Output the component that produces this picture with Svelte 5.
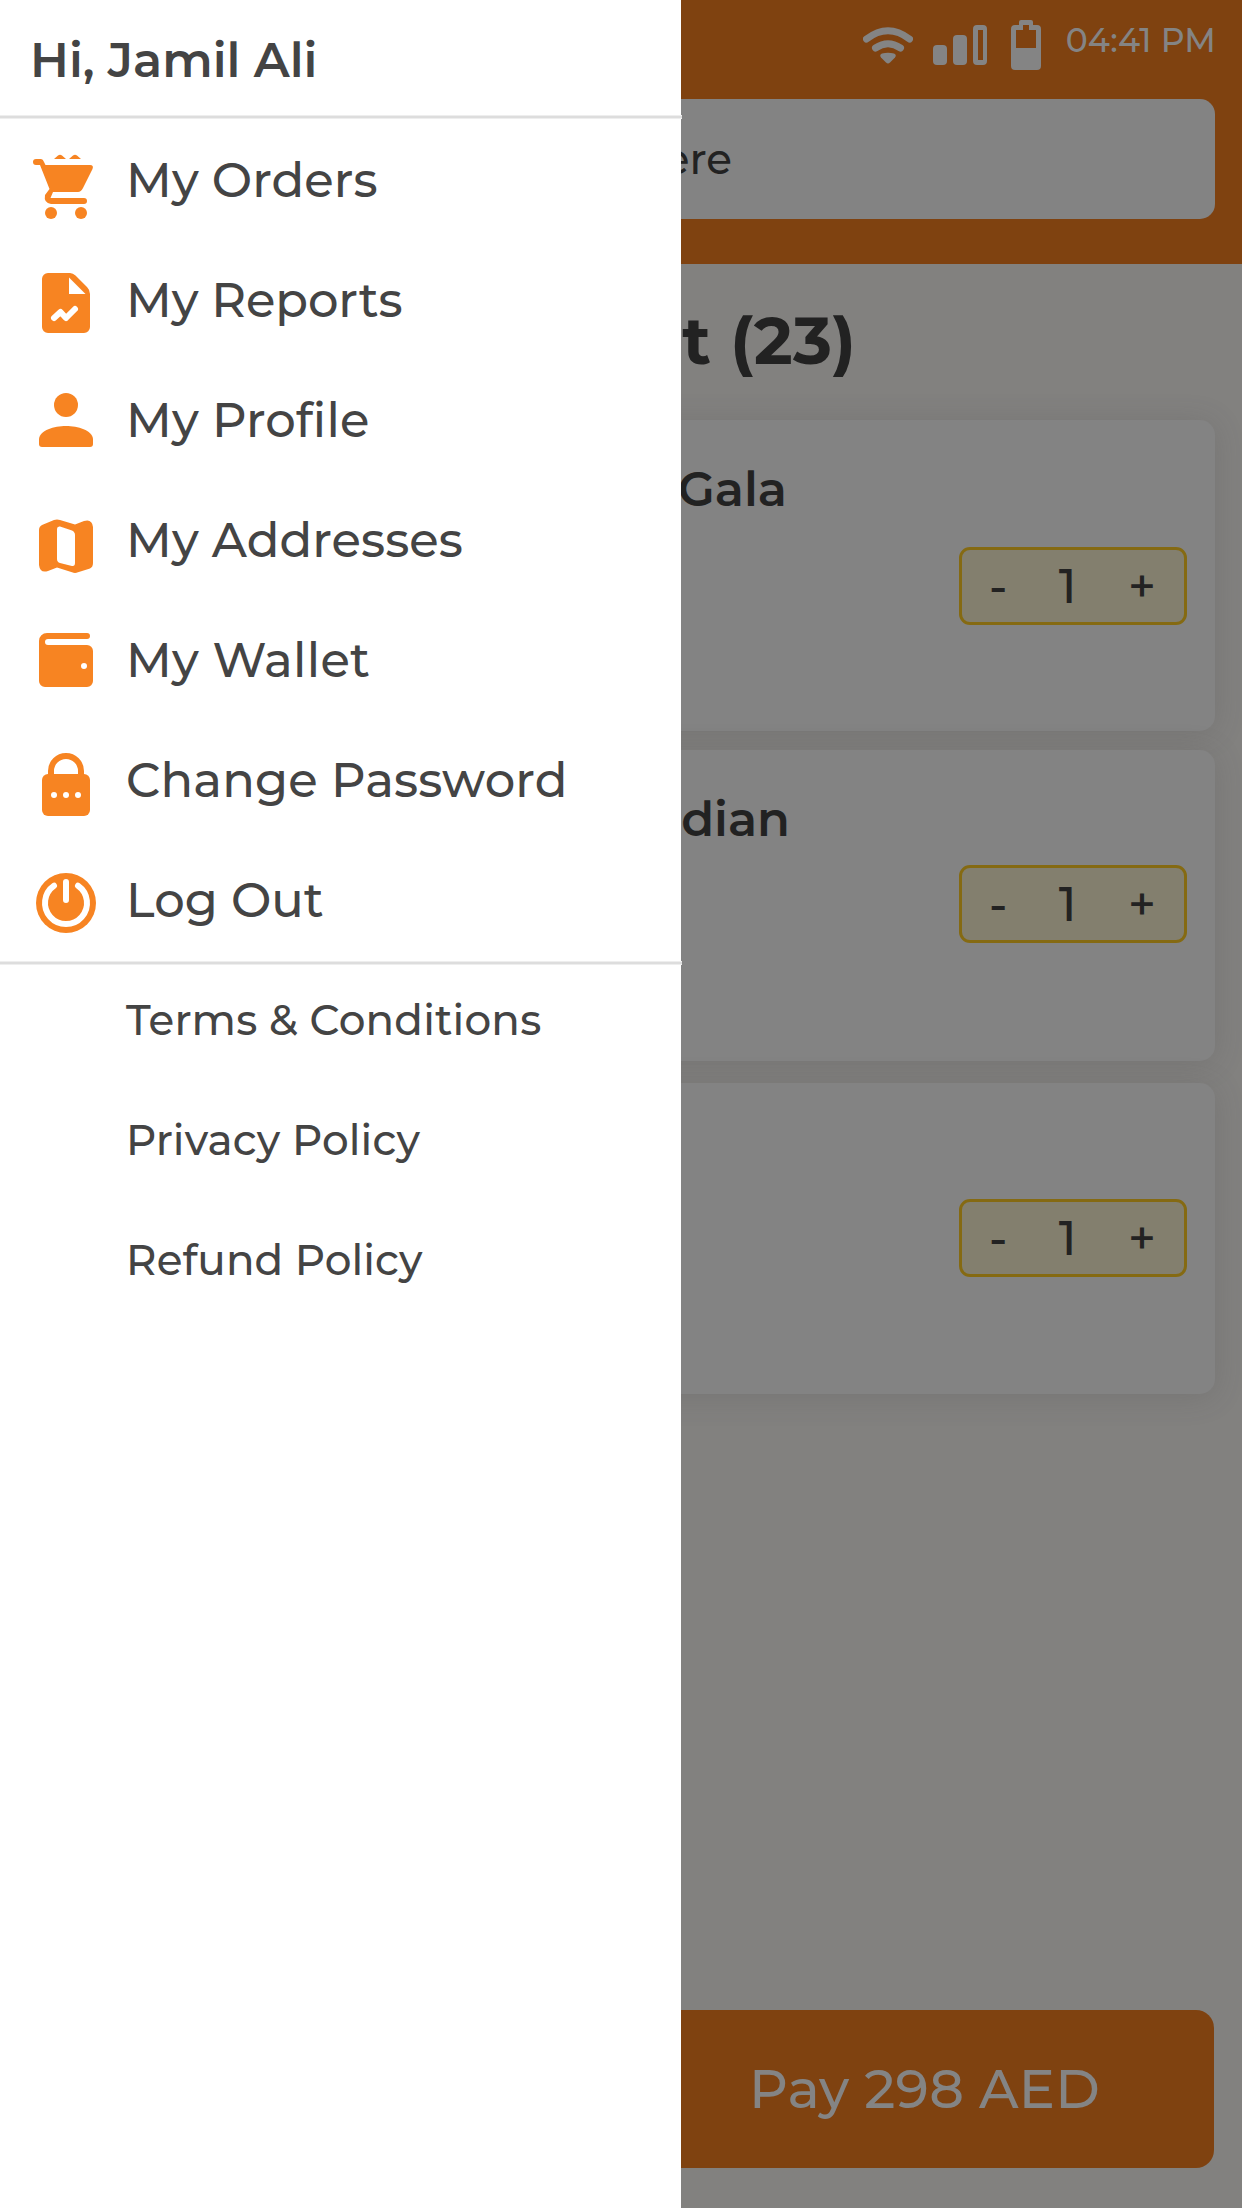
<script>
  // "track" is the letter spacing of a label, in pixels.
  const menu = [
    { icon: 'cart', label: 'My Orders', track: 0.08 },
    { icon: 'report', label: 'My Reports', track: -0.1 },
    { icon: 'person', label: 'My Profile', track: 0.14 },
    { icon: 'map', label: 'My Addresses', track: 0.07 },
    { icon: 'wallet', label: 'My Wallet', track: 0.28 },
    { icon: 'lock', label: 'Change Password', track: 0.19 },
    { icon: 'power', label: 'Log Out', track: 0.05 }
  ];
  const links = [
    { label: 'Terms & Conditions', track: 0.2 },
    { label: 'Privacy Policy', track: 0.17 },
    { label: 'Refund Policy', track: 0.1 }
  ];
  const items = [
    { name: 'Gala', kind: 'first' },
    { name: 'Canadian', kind: 'second' },
    { name: '', kind: 'third' }
  ];
</script>

<div class="screen">
  <main class="shop">
    <header class="top">
      <div class="status">
        <svg class="wifi" viewBox="0 0 50 38"><g fill="none" stroke="currentColor" stroke-width="7" stroke-linecap="round"><path d="M3.500 12Q25 -4.500 46.500 12" /><path d="M12.500 21Q25 12.500 37.500 21" /></g><path fill="currentColor" d="M19 26.500Q25 25 31 26.500Q34 28 32 30.500L27 35.500Q25 37.500 23 35.500L18 30.500Q16 28 19 26.500Z" /></svg>
        <svg class="signal" viewBox="0 0 55 40" fill="currentColor"><rect y="20" width="14" height="20" rx="4" /><rect x="20" y="10" width="14" height="30" rx="4" /><path fill-rule="evenodd" d="M44 0h6a4 4 0 0 1 4 4v32a4 4 0 0 1-4 4H44a4 4 0 0 1-4-4V4a4 4 0 0 1 4-4ZM45 5v30H50V5Z" /></svg>
        <svg class="battery" viewBox="0 0 30 50" fill="currentColor"><path fill-rule="evenodd" d="M10 0H20a2 2 0 0 1 2 2V5h4a4 4 0 0 1 4 4V46a4 4 0 0 1-4 4H4a4 4 0 0 1-4-4V9a4 4 0 0 1 4-4H8V2a2 2 0 0 1 2-2ZM12 5V10H5V28H25V10H18V5Z" /></svg>
        <span class="time">04:41 PM</span>
      </div>
      <div class="search"><span>Search here</span></div>
    </header>
    <h1>Cart (23)</h1>
    <div class="cards">
      {#each items as item}
        <article class="card {item.kind}">
          <div class="name">{item.name}</div>
          <div class="stepper"><span>-</span><span>1</span><span>+</span></div>
        </article>
      {/each}
    </div>
    <div class="pay">Pay 298 AED</div>
  </main>

  <aside class="drawer">
    <div class="hello">Hi, Jamil Ali</div>
    <nav>
      {#each menu as m}
        <div class="row">
          <svg class="icon" viewBox="0 0 100 120" fill="currentColor">
            {#if m.icon === 'cart'}
              <path d="M36 39H41Q43 39 44 42L45.500 45H90Q94 45 92.500 49L83 68Q81 72 78 72H53L50.500 78H84a3 3 0 0 1 0 6H51Q43.500 83 45 75L49.500 69L40 45H36a3 3 0 0 1 0-6ZM54 39L58 35.500Q60 34 62 35.500L66 39ZM69 39L73 35.500Q75 34 77 35.500L81 39Z" /><circle cx="51" cy="93" r="6" /><circle cx="81" cy="93" r="6" />
            {:else if m.icon === 'report'}
              <path fill-rule="evenodd" d="M48 33H70Q73 33 75.500 35.500L87 47Q90 50 90 54V87a6 6 0 0 1-6 6H48a6 6 0 0 1-6-6V39a6 6 0 0 1 6-6ZM69 37.500V54H85.500Z" /><path d="M54 78L60.500 72L66 78L75 69" fill="none" stroke="#fff" stroke-width="6" stroke-linecap="round" stroke-linejoin="round" />
            {:else if m.icon === 'person'}
              <circle cx="66" cy="45" r="12" /><path d="M39 79C40 70 54 66 66 66S92 70 93 79V84Q93 87 90 87H42Q39 87 39 84Z" />
            {:else if m.icon === 'map'}
              <path fill-rule="evenodd" d="M39 50Q39 46.500 42 45L54 40Q57 39 60 40L75 44.500L84 41Q92 38.500 93 47V83Q93 87 90 88.500L78 92.300Q75 93.500 72 92.300L57 87.500L48 91Q40 93.500 39 85ZM57 49V79Q57 82 60 83L72 86Q75 86.500 75 83V55Q75 52 72 50.500L60 46.500Q57 46 57 49Z" />
            {:else if m.icon === 'wallet'}
              <path fill-rule="evenodd" d="M47 33H87a3 3 0 0 1 0 6H48a3 3 0 0 0 0 6H87a6 6 0 0 1 6 6V81a6 6 0 0 1-6 6H45a6 6 0 0 1-6-6V41a8 8 0 0 1 8-8ZM84 63a3 3 0 1 0 0 6a3 3 0 1 0 0-6Z" />
            {:else if m.icon === 'lock'}
              <path d="M51 58V51a15 15 0 0 1 30 0V58" fill="none" stroke="currentColor" stroke-width="6" /><rect x="42" y="54" width="48" height="42" rx="6" /><g fill="#fff"><circle cx="54" cy="75" r="3" /><circle cx="66" cy="75" r="3" /><circle cx="78" cy="75" r="3" /></g>
            {:else}
              <circle cx="66" cy="63" r="30" /><path fill="none" stroke="#fff" stroke-linecap="round" stroke-width="6" d="M54 45.750a21 21 0 1 0 24 0M66 42V60" />
            {/if}
          </svg>
          <span style:letter-spacing="{m.track}px">{m.label}</span>
        </div>
      {/each}
    </nav>
    <div class="links">
      {#each links as l}
        <div class="link" style:letter-spacing="{l.track}px">{l.label}</div>
      {/each}
    </div>
  </aside>
</div>

<style>
  .screen { position: relative; width: 1242px; height: 2208px; overflow: hidden; background: #82817f; color: #222; font-family: Montserrat, Inter, "Open Sans", sans-serif; white-space: nowrap; }
  .shop { display: flex; flex-direction: column; height: 2208px; }
  .top { height: 264px; background: #7f4210; flex: none; }
  .status { height: 99px; display: flex; justify-content: flex-end; align-items: flex-start; color: #848484; padding-right: 26px; box-sizing: border-box; }
  .status svg { flex: none; display: block; }
  .wifi { width: 50px; height: 38px; margin: 27px 20px 0 0; }
  .signal { width: 55px; height: 40px; margin: 25px 23px 0 0; }
  .battery { width: 30px; height: 50px; margin: 20px 25px 0 0; }
  .time { width: 150px; display: flex; justify-content: flex-end; font-size: 33px; font-weight: 500; line-height: 80px; letter-spacing: .15px; }
  .search { height: 120px; margin-right: 27px; border-radius: 0 15px 15px 0; background: #838383; display: flex; box-sizing: border-box; padding-right: 483px; justify-content: flex-end; font-size: 42px; font-weight: 500; line-height: 120px; }
  h1 { margin: 0; height: 156px; flex: none; display: flex; justify-content: flex-end; padding-right: 386px; font-size: 66px; font-weight: 700; line-height: 154px; letter-spacing: .2px; }
  .cards { display: flex; flex-direction: column; }
  .card { height: 311px; margin-right: 27px; border-radius: 0 15px 15px 0; background: #838383; box-shadow: 0 3px 30px rgba(70, 70, 70, .2); display: flex; flex-direction: column; }
  .second { margin-top: 19px; }
  .third { margin-top: 22px; }
  .name { height: 127px; flex: none; display: flex; justify-content: flex-end; padding-right: 428px; font-size: 48px; font-weight: 600; line-height: 138px; }
  .second .name { height: 115px; padding-right: 425px; }
  .third .name { height: 116px; }
  .stepper { align-self: flex-end; margin-right: 28px; width: 228px; height: 78px; box-sizing: border-box; border: 3px solid #856a12; border-radius: 11px; background: #837f6e; display: flex; justify-content: space-between; align-items: center; padding: 0 28px 0 27px; font-size: 48px; font-weight: 500; line-height: 72px; }
  .pay { margin-top: auto; margin-bottom: 40px; margin-right: 28px; height: 158px; background: #7f4210; color: #848484; border-radius: 0 18px 18px 0; display: flex; justify-content: flex-end; padding-right: 114px; font-size: 54px; font-weight: 500; line-height: 158px; letter-spacing: .25px; }
  .drawer { position: absolute; left: 0; top: 0; width: 681px; height: 2208px; background: #fff; color: #444; }
  .hello { height: 120px; box-sizing: border-box; margin-right: -1px; padding-left: 30px; font-size: 48px; font-weight: 600; line-height: 120px; background: linear-gradient(#eee 0 1px, #ddd 1px 3px, #eee 3px 4px) 0 115px / 100% 4px no-repeat; }
  .row { height: 120px; display: flex; gap: 26px; font-size: 48px; font-weight: 500; line-height: 120px; }
  .icon { width: 100px; height: 120px; color: #f78422; flex: none; display: block; }
  .links { margin-right: -1px; background: linear-gradient(#eee 0 1px, #ddd 1px 3px, #eee 3px 4px) 0 1px / 100% 4px no-repeat; }
  .link { height: 120px; padding-left: 126px; font-size: 42px; font-weight: 500; line-height: 120px; }
</style>
